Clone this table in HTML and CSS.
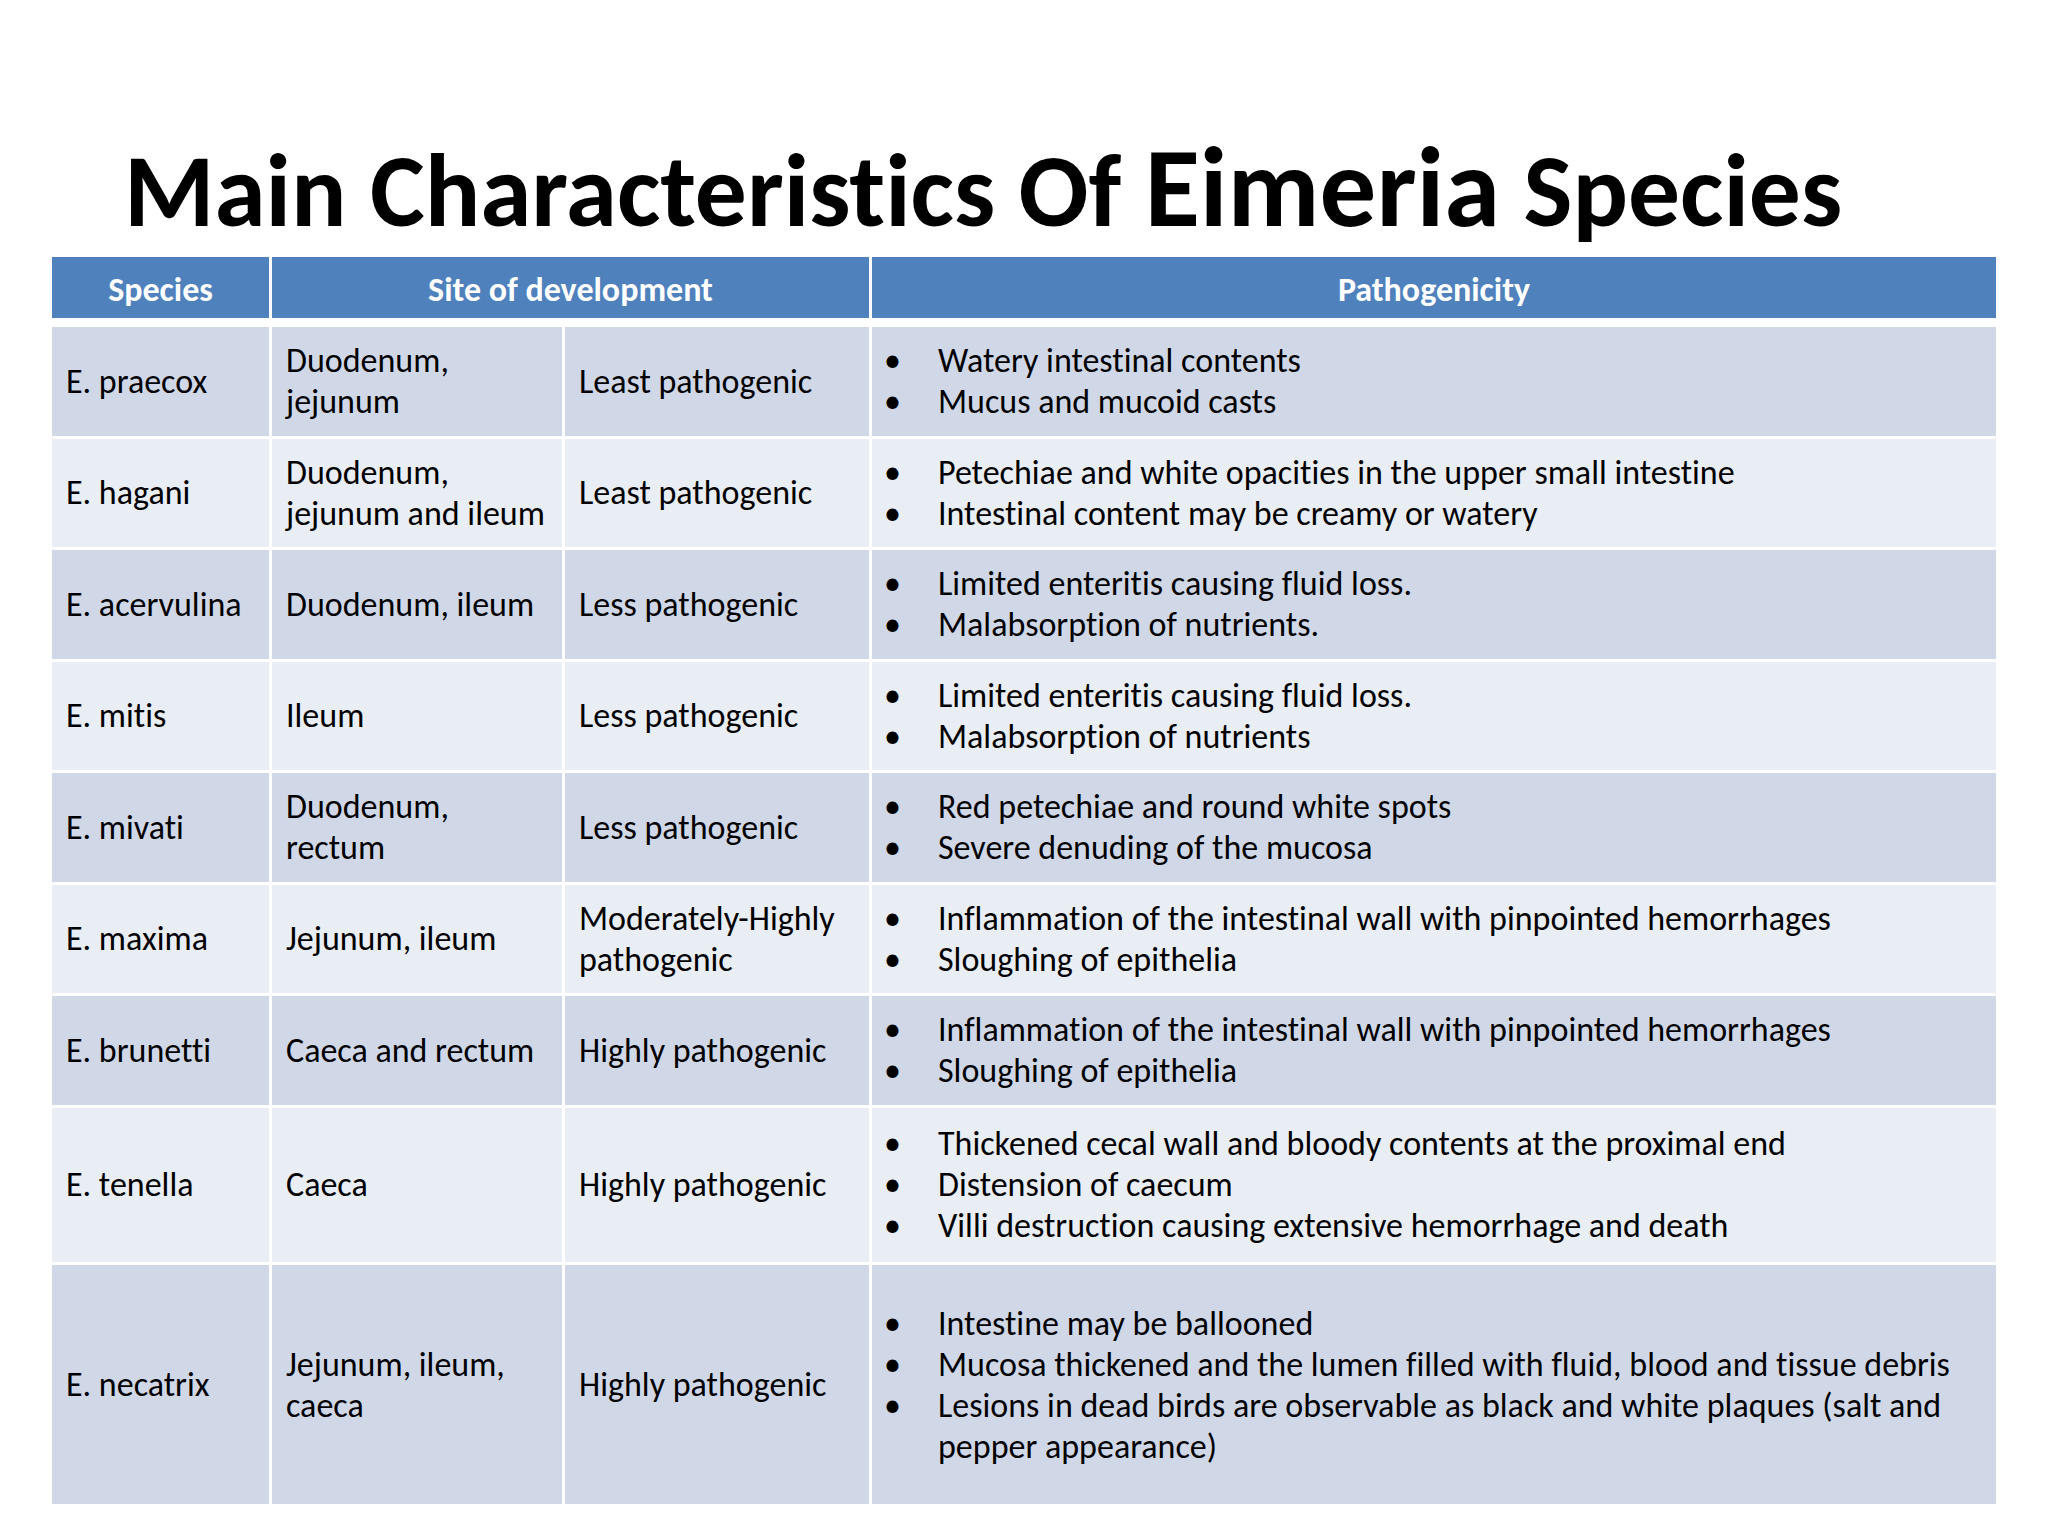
FILE: index.html
```html
<!DOCTYPE html>
<html lang="en">
<head>
<meta charset="utf-8">
<title>Main Characteristics Of Eimeria Species</title>
<link rel="stylesheet" href="styles.css">
</head>
<body>
<div class="slide">
  <h1 class="title">Main Characteristics Of <span class="big">Eimeria</span> Species</h1>
  <div class="table">
    <div class="th">Species</div>
    <div class="th span2">Site of development</div>
    <div class="th">Pathogenicity</div>

    <div class="td odd">E. praecox</div>
    <div class="td odd">Duodenum,<br>jejunum</div>
    <div class="td odd">Least pathogenic</div>
    <div class="td odd list"><ul class="bullets"><li>Watery intestinal contents</li><li>Mucus and mucoid casts</li></ul></div>

    <div class="td even">E. hagani</div>
    <div class="td even">Duodenum,<br>jejunum and ileum</div>
    <div class="td even">Least pathogenic</div>
    <div class="td even list"><ul class="bullets"><li>Petechiae and white opacities in the upper small intestine</li><li>Intestinal content may be creamy or watery</li></ul></div>

    <div class="td odd">E. acervulina</div>
    <div class="td odd">Duodenum, ileum</div>
    <div class="td odd">Less pathogenic</div>
    <div class="td odd list"><ul class="bullets"><li>Limited enteritis causing fluid loss.</li><li>Malabsorption of nutrients.</li></ul></div>

    <div class="td even">E. mitis</div>
    <div class="td even">Ileum</div>
    <div class="td even">Less pathogenic</div>
    <div class="td even list"><ul class="bullets"><li>Limited enteritis causing fluid loss.</li><li>Malabsorption of nutrients</li></ul></div>

    <div class="td odd">E. mivati</div>
    <div class="td odd">Duodenum,<br>rectum</div>
    <div class="td odd">Less pathogenic</div>
    <div class="td odd list"><ul class="bullets"><li>Red petechiae and round white spots</li><li>Severe denuding of the mucosa</li></ul></div>

    <div class="td even">E. maxima</div>
    <div class="td even">Jejunum, ileum</div>
    <div class="td even">Moderately-Highly<br>pathogenic</div>
    <div class="td even list"><ul class="bullets"><li>Inflammation of the intestinal wall with pinpointed hemorrhages</li><li>Sloughing of epithelia</li></ul></div>

    <div class="td odd">E. brunetti</div>
    <div class="td odd">Caeca and rectum</div>
    <div class="td odd">Highly pathogenic</div>
    <div class="td odd list"><ul class="bullets"><li>Inflammation of the intestinal wall with pinpointed hemorrhages</li><li>Sloughing of epithelia</li></ul></div>

    <div class="td even">E. tenella</div>
    <div class="td even">Caeca</div>
    <div class="td even">Highly pathogenic</div>
    <div class="td even list"><ul class="bullets"><li>Thickened cecal wall and bloody contents at the proximal end</li><li>Distension of caecum</li><li>Villi destruction causing extensive hemorrhage and death</li></ul></div>

    <div class="td odd">E. necatrix</div>
    <div class="td odd">Jejunum, ileum,<br>caeca</div>
    <div class="td odd">Highly pathogenic</div>
    <div class="td odd list"><ul class="bullets"><li>Intestine may be ballooned</li><li>Mucosa thickened and the lumen filled with fluid, blood and tissue debris</li><li>Lesions in dead birds are observable as black and white plaques (salt and<br>pepper appearance)</li></ul></div>
  </div>
</div>
</body>
</html>
```

FILE: styles.css
```css
html, body {
  margin: 0;
  padding: 0;
  background: #ffffff;
}

body {
  font-family: "Carlito", "Lato", "Open Sans", sans-serif;
  font-variant-ligatures: none;
  color: #000000;
}

.slide {
  width: 2048px;
  height: 1536px;
  overflow: hidden;
}

.title {
  box-sizing: border-box;
  height: 257px;
  margin: 0;
  padding: 127px 0 0 124px;
  font-size: 103.5px;
  line-height: 120px;
  font-weight: 700;
  white-space: nowrap;
}

.title .big {
  font-size: 113px;
}

.table {
  display: grid;
  margin-left: 52px;
  grid-template-columns: 217px 290px 304px 1124px;
  grid-template-rows: 67px repeat(7, 108.5px) 154.5px 239px;
  column-gap: 3px;
  row-gap: 3px;
  font-size: 34px;
  line-height: 41px;
}

.th {
  background: #4f81bd;
  color: #ffffff;
  font-weight: 700;
  margin-bottom: 6px;
  padding-top: 4px;
  display: flex;
  align-items: center;
  justify-content: center;
}

.span2 {
  grid-column: span 2;
}

.td {
  display: flex;
  align-items: center;
  padding: 0 2px 0 14px;
}

.td.list {
  padding-left: 12px;
}

.odd {
  background: #d0d8e8;
}

.even {
  background: #e9edf4;
}

.bullets {
  list-style: none;
  margin: 0;
  padding: 0;
}

.bullets li {
  padding-left: 54px;
  text-indent: -54px;
}

.bullets li::before {
  content: "\2022";
  display: inline-block;
  width: 54px;
  text-indent: 0;
}
```
